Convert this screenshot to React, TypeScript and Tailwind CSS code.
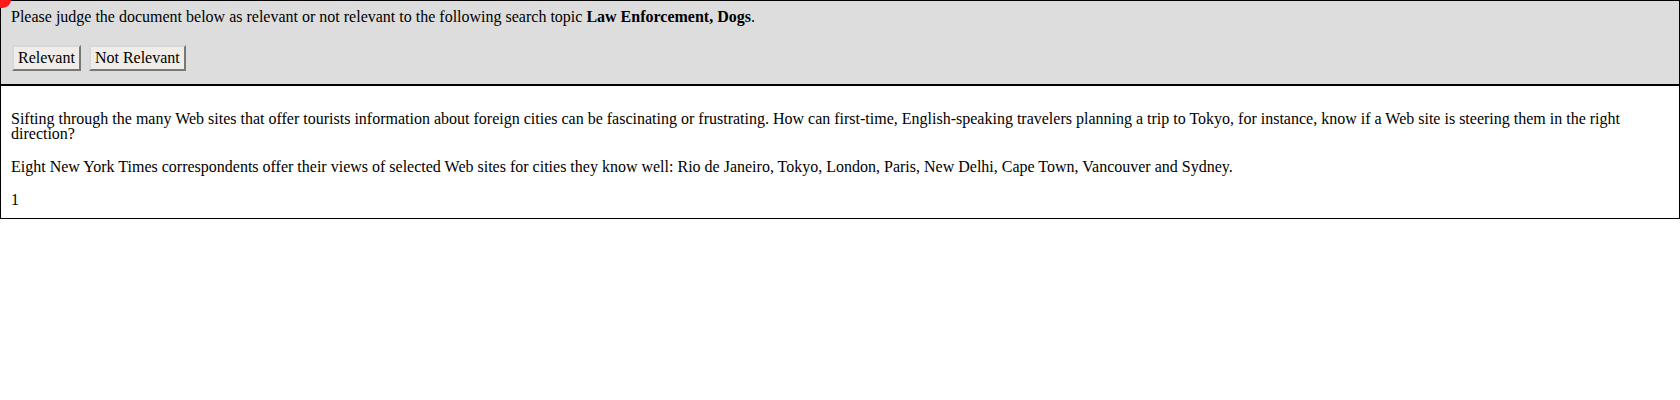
export default function App() {
  return (
    <div className="relative w-[1680px] font-['Liberation_Serif',serif] text-[16px] text-black">
      {/* red marker in the corner */}
      <span className="absolute z-10 -left-[6px] -top-[9px] h-[17px] w-[17px] rounded-full bg-[#ff1a1a]" />

      {/* Judging panel */}
      <div className="border border-black bg-[#dddddd] px-[10px] pt-[8px] pb-[13px]">
        <p className="leading-[15px]">
          Please judge the document below as relevant or not relevant to the following search topic{" "}
          <b>Law Enforcement, Dogs</b>.
        </p>
        <div className="mt-[21px] flex gap-[8px] pl-[1px]">
          <button className="h-[26px] border-2 border-t-[#d8d8d8] border-l-[#d8d8d8] border-r-[#777777] border-b-[#777777] bg-[#f0ede8] px-[4px] leading-[20px]">
            Relevant
          </button>
          <button className="h-[26px] border-2 border-t-[#d8d8d8] border-l-[#d8d8d8] border-r-[#777777] border-b-[#777777] bg-[#f0ede8] px-[4px] leading-[20px]">
            Not Relevant
          </button>
        </div>
      </div>

      {/* Document */}
      <div className="border border-black bg-white px-[10px] pt-[25px] pb-[11px] leading-[15px]">
        <p>
          Sifting through the many Web sites that offer tourists information about foreign cities can be
          fascinating or frustrating. How can first-time, English-speaking travelers planning a trip to
          Tokyo, for instance, know if a Web site is steering them in the right direction?
        </p>
        <p className="mt-[18px]">
          Eight New York Times correspondents offer their views of selected Web sites for cities they know
          well: Rio de Janeiro, Tokyo, London, Paris, New Delhi, Cape Town, Vancouver and Sydney.
        </p>
        <p className="mt-[18px]">1</p>
      </div>
    </div>
  );
}
